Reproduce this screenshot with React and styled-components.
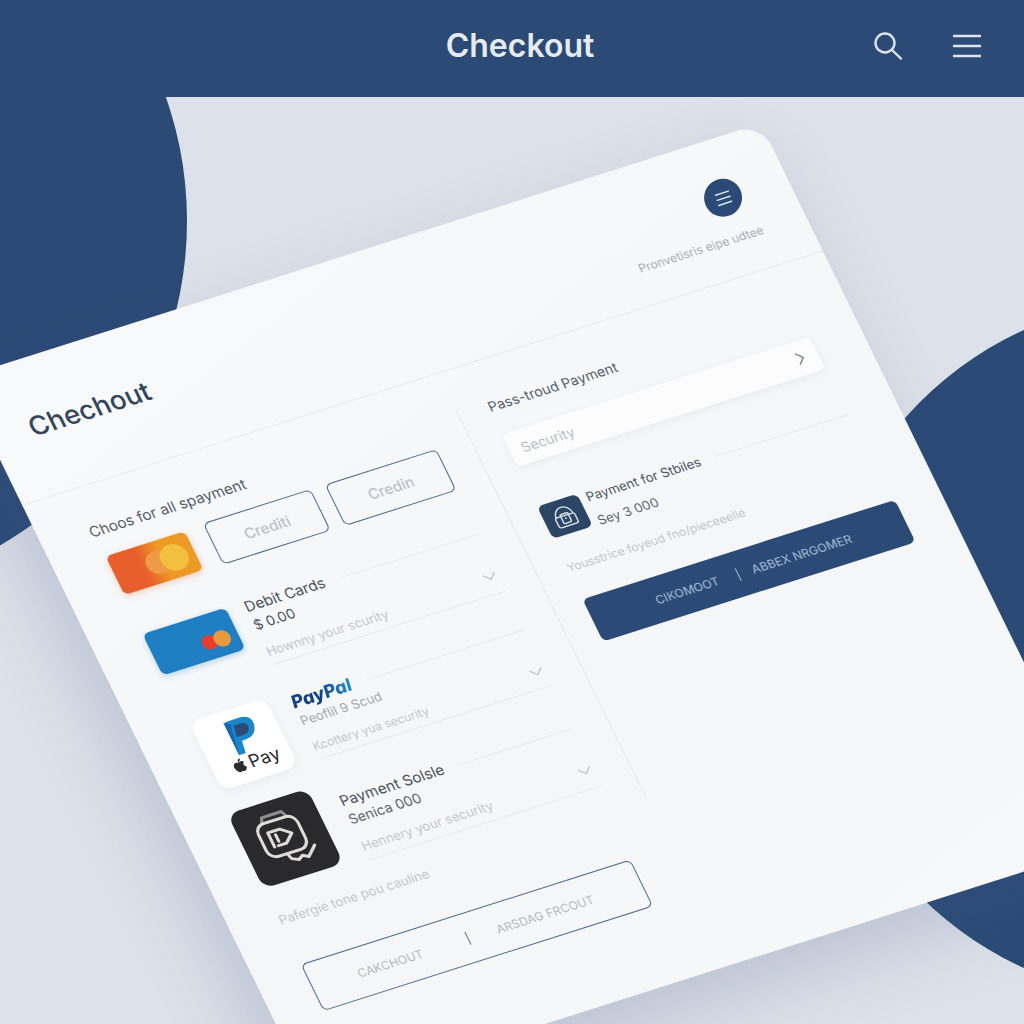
import React from "react";
import styled, { createGlobalStyle } from "styled-components";
import { FaApple } from "react-icons/fa";

const navy = "#2b4a75";

const Global = createGlobalStyle`
  html, body {
    margin: 0;
    padding: 0;
    background: #dde1e9;
    font-family: Inter, "Noto Sans", sans-serif;
  }
`;

const Page = styled.div`
  position: relative;
  width: 1024px;
  height: 1024px;
  overflow: hidden;
  background: #dde1e9;
`;

const Header = styled.header`
  position: relative;
  z-index: 3;
  height: 97px;
  background: ${navy};
  display: grid;
  grid-template-columns: 1fr auto 1fr;
  align-items: center;
  padding: 0 43px 6px;
  box-sizing: border-box;
`;

const HeaderTitle = styled.h1`
  grid-column: 2;
  margin: 0 0 0 16px;
  font-size: 32px;
  font-weight: 600;
  color: #e6ebf3;
`;

const HeaderIcons = styled.div`
  grid-column: 3;
  display: flex;
  justify-content: flex-end;
  align-items: center;
  gap: 50px;
`;

const Blob = styled.div`
  position: absolute;
  z-index: 1;
  border-radius: 50%;
  background: ${navy};
  left: ${(p) => p.$x - p.$r}px;
  top: ${(p) => p.$y - p.$r}px;
  width: ${(p) => p.$r * 2}px;
  height: ${(p) => p.$r * 2}px;
`;

const Stage = styled.main`
  position: relative;
  z-index: 2;
  height: 927px;
`;

/* the whole card is one tilted sheet, its content just flows inside it */
const Card = styled.section`
  width: 840px;
  height: 800px;
  border-radius: 24px;
  background: linear-gradient(160deg, #f8f9fb, #f5f6f8 60%, #f7f8fa);
  box-shadow: -22px 30px 70px rgba(70, 92, 135, 0.22);
  transform-origin: 0 0;
  transform: matrix(0.953, -0.303, 0.44, 0.9, -40, 281);
`;

const CardHead = styled.div`
  height: 142px;
  box-sizing: border-box;
  padding: 41px 45px 0 41px;
  border-bottom: 1px solid #e6e9ed;
  display: flex;
  justify-content: space-between;
  align-items: flex-start;
`;

const CardTitle = styled.h2`
  margin: 11px 0 0;
  font-size: 27px;
  line-height: 36px;
  font-weight: 500;
  color: #35465a;
`;

const HeadAside = styled.div`
  display: flex;
  flex-direction: column;
  align-items: flex-end;
  gap: 16px;
`;

/* undoes the sheet's shear so the dot stays a true circle */
const MenuDot = styled.div`
  width: 38px;
  height: 38px;
  margin-right: 3px;
  border-radius: 50%;
  background: ${navy};
  display: flex;
  align-items: center;
  justify-content: center;
  transform: matrix(0.908, 0.306, -0.444, 0.962, 0, 0);
  svg {
    transform: rotate(-18deg);
  }
`;

const Body = styled.div`
  display: grid;
  grid-template-columns: 436px 1px 1fr;
  align-items: start;
`;

const LeftCol = styled.div`
  padding: 38px 35px 0 49px;
`;

const Divider = styled.div`
  margin-top: 40px;
  height: 431px;
  background: #e6e9ed;
`;

const RightCol = styled.div`
  padding: 39px 46px 0 30px;
`;

const Label = styled.div`
  font-size: ${(p) => p.$size || 15}px;
  line-height: 18px;
  color: #55606d;
`;

const Faint = styled.div`
  font-size: ${(p) => p.$size || 13}px;
  line-height: 16px;
  color: ${(p) => p.$color || "#c3c8cf"};
  white-space: nowrap;
`;

const ChoiceRow = styled.div`
  margin-top: 16px;
  display: flex;
  gap: 15px;
`;

const OrangeCard = styled.div`
  width: 84px;
  height: 43px;
  margin: 2px 5px 0 4px;
  border-radius: 6px;
  background: linear-gradient(90deg, #e85e2d 35%, #ec9a25 62%);
  box-shadow: 0 2px 6px rgba(235, 110, 50, 0.3);
  display: flex;
  align-items: center;
  justify-content: flex-end;
  padding-right: 7px;
  box-sizing: border-box;
`;

const Ring = styled.span`
  width: ${(p) => p.$d}px;
  height: ${(p) => p.$d}px;
  border-radius: 50%;
  background: ${(p) => p.$c};
  margin-left: ${(p) => p.$overlap || 0}px;
`;

const ChoiceButton = styled.button`
  width: ${(p) => p.$w}px;
  height: 46px;
  border: 1px solid #46688f;
  border-radius: 6px;
  background: transparent;
  font: 500 15px Inter, sans-serif;
  color: #bcc2ca;
`;

const Rows = styled.div`
  margin-top: 38px;
  display: flex;
  flex-direction: column;
  gap: 32px;
`;

const Row = styled.div`
  display: grid;
  grid-template-columns: 90px 1fr;
  column-gap: 18px;
  align-items: start;
`;

const RowText = styled.div`
  margin-top: ${(p) => p.$top || 0}px;
  border-bottom: 1px solid #e6e9ed;
  padding-bottom: ${(p) => p.$pad}px;
`;

const TitleLine = styled.div`
  display: flex;
  align-items: center;
  gap: 16px;
  font-size: 15px;
  line-height: 20px;
  color: #4a5460;
  white-space: nowrap;
  &::after {
    content: "";
    flex: 1;
    height: 1px;
    background: #e6e9ed;
  }
`;

const PayPalWord = styled.span`
  font-size: 18px;
  font-weight: 800;
  font-style: italic;
  background: linear-gradient(90deg, #123f85 45%, #1c8fd6);
  -webkit-background-clip: text;
  background-clip: text;
  color: transparent;
`;

const Sub = styled.div`
  margin-top: 1px;
  font-size: ${(p) => p.$size || 14}px;
  line-height: 18px;
  color: ${(p) => p.$color || "#5c6672"};
  white-space: nowrap;
`;

const NoteLine = styled.div`
  margin-top: ${(p) => p.$top || 12}px;
  height: 16px;
  display: flex;
  justify-content: space-between;
  align-items: center;
`;

const BlueCard = styled.div`
  width: 87px;
  height: 46px;
  margin: 4px 0 0 3px;
  border-radius: 6px;
  background: #1f7fc2;
  box-shadow: 0 2px 6px rgba(30, 130, 200, 0.3);
  display: flex;
  align-items: center;
  justify-content: flex-end;
  padding: 10px 8px 0 0;
  box-sizing: border-box;
`;

const LogoTile = styled.div`
  width: 80px;
  height: 76px;
  margin: -3px 0 0 6px;
  border-radius: 12px;
  background: #fff;
  box-shadow: 0 3px 10px rgba(90, 110, 150, 0.08);
  display: flex;
  flex-direction: column;
  align-items: center;
  justify-content: center;
  svg:first-child {
    margin-left: 8px;
  }
`;

const ApplePay = styled.div`
  display: flex;
  align-items: center;
  gap: 2px;
  font-size: 18px;
  line-height: 18px;
  color: #2a2c30;
`;

const DarkTile = styled.div`
  width: 84px;
  height: 83px;
  margin-top: -8px;
  border-radius: 12px;
  background: #2a2a2c;
  display: flex;
  align-items: center;
  justify-content: center;
`;

const Foot = styled.div`
  margin-top: 22px;
`;

const OutlineButton = styled.button`
  margin-top: 41px;
  width: 346px;
  height: 52px;
  padding: 0 20px 0 0;
  border: 1px solid #46688f;
  border-radius: 6px;
  background: transparent;
  display: grid;
  grid-template-columns: 1fr auto 1fr;
  align-items: center;
  justify-items: center;
  font: 400 12px Inter, sans-serif;
  color: #b4bac2;
`;

const Sep = styled.span`
  width: 1px;
  height: 14px;
  background: ${(p) => p.$c};
`;

const SecurityField = styled.div`
  margin-top: 21px;
  height: 36px;
  width: 323px;
  box-sizing: border-box;
  padding: 0 10px 0 12px;
  border-radius: 6px;
  background: #fcfcfd;
  box-shadow: 0 2px 8px rgba(120, 135, 165, 0.1);
  display: flex;
  align-items: center;
  justify-content: space-between;
  font-size: 14px;
  color: #b9bfc6;
`;

const Summary = styled.div`
  margin-top: 44px;
  display: flex;
  align-items: flex-start;
  gap: 7px;
`;

const SummaryIcon = styled.div`
  flex: none;
  width: 42px;
  height: 36px;
  border-radius: 6px;
  background: #2b4565;
  display: flex;
  align-items: center;
  justify-content: center;
`;

const SummaryText = styled.div`
  flex: 1;
  margin-top: -3px;
  padding-right: 4px;
`;

const SummaryTitle = styled(TitleLine)`
  font-size: 13px;
  line-height: 18px;
`;

const SummarySub = styled(Sub)`
  margin-top: 8px;
  font-size: 13px;
`;

const CheckoutButton = styled.button`
  margin-top: 26px;
  width: 328px;
  height: 47px;
  padding: 0;
  border: 0;
  border-radius: 6px;
  background: ${navy};
  display: grid;
  grid-template-columns: 152px auto 1fr;
  align-items: center;
  font: 500 12px Inter, sans-serif;
  color: #93abc9;
`;

const BtnLeft = styled.span`
  justify-self: end;
  margin-right: 20px;
`;

const BtnRight = styled.span`
  justify-self: start;
  margin-left: 14px;
`;

const Chevron = ({ dir = "down", color = "#bfc5cc" }) => (
  <svg width="16" height="16" viewBox="0 0 16 16" fill="none" stroke={color} strokeWidth="1.4" style={{ marginBottom: dir === "down" ? 8 : 0 }}>
    {dir === "down" ? <path d="M2 5l6 6 6-6" /> : <path d="M5 2l6 6-6 6" />}
  </svg>
);

const SearchIcon = () => (
  <svg width="30" height="30" viewBox="0 0 30 30" fill="none" stroke="#dbe4f0" strokeWidth="2.4" strokeLinecap="round">
    <circle cx="12" cy="12" r="9.5" />
    <path d="M19 19l9 8.6" />
  </svg>
);

const BurgerIcon = ({ size = 28, stroke = 2.6 }) => (
  <svg width={size} height={size} viewBox="0 0 28 28" stroke="#dbe4f0" strokeWidth={stroke}>
    <path d="M0 4h28M0 14h28M0 24h28" />
  </svg>
);

const PayPalMark = () => (
  <svg width="34" height="38" viewBox="0 0 34 38">
    <path d="M6 1h15c8 0 12 5 10 12-2 8-8 11-14 11h-4l-2 13H4z" fill="#1b87c9" />
    <path d="M12 7h8c4 0 6 3 5 6-1 5-5 6-9 6h-6z" fill="#2d4b78" />
    <path d="M4 37l6-32-6-4z" fill="#1468b0" />
  </svg>
);

const DeviceMark = () => (
  <svg width="60" height="62" viewBox="0 0 58 60" fill="none" stroke="#dedcd7" strokeWidth="3" strokeLinejoin="round" strokeLinecap="round">
    <path d="M15 8l2-5h20l2 5" stroke="#8c8c8c" />
    <rect x="7" y="9" width="40" height="35" rx="9" />
    <path d="M16 19v15M16 19h12l9 7-9 8h-8" />
    <path d="M22 23v7" />
    <path d="M24 44l2 6 6 3 5-3 5 3 10-9" />
  </svg>
);

const HomeLock = () => (
  <svg width="26" height="26" viewBox="0 0 26 26" fill="none" stroke="#dbe3ee" strokeWidth="1.4" strokeLinejoin="round">
    <path d="M4 12c1-6 5-9 9-9s8 3 9 9" />
    <rect x="3" y="12" width="20" height="11" rx="2" />
    <rect x="9" y="10" width="8" height="10" rx="1" />
    <path d="M12 15h2" />
  </svg>
);

const App = () => {
  return (
    <Page>
      <Global />
      <Header>
        <HeaderTitle>Checkout</HeaderTitle>
        <HeaderIcons>
          <SearchIcon />
          <BurgerIcon />
        </HeaderIcons>
      </Header>
      <Blob $x={-188} $y={221} $r={375} />
      <Blob $x={1168} $y={649} $r={350} />
      <Stage>
        <Card>
          <CardHead>
            <CardTitle>Chechout</CardTitle>
            <HeadAside>
              <MenuDot>
                <BurgerIcon size={15} stroke={2.8} />
              </MenuDot>
              <Faint $size={12} $color="#a9b0b9">Pronvetisris eipe udtee</Faint>
            </HeadAside>
          </CardHead>
          <Body>
            <LeftCol>
              <Label>Choos for all spayment</Label>
              <ChoiceRow>
                <OrangeCard>
                  <Ring $d={24} $c="#f09a48" />
                  <Ring $d={28} $c="#f2bf3f" $overlap={-9} />
                </OrangeCard>
                <ChoiceButton $w={114}>Crediti</ChoiceButton>
                <ChoiceButton $w={118}>Credin</ChoiceButton>
              </ChoiceRow>
              <Rows>
                <Row>
                  <BlueCard>
                    <Ring $d={15} $c="#ea3d2b" />
                    <Ring $d={17} $c="#e79a3d" $overlap={-3} />
                  </BlueCard>
                  <RowText $pad={6}>
                    <TitleLine>Debit Cards</TitleLine>
                    <Sub $color="#4a5460">$ 0.00</Sub>
                    <NoteLine>
                      <Faint>Hownny your scurity</Faint>
                      <Chevron />
                    </NoteLine>
                  </RowText>
                </Row>
                <Row>
                  <LogoTile>
                    <PayPalMark />
                    <ApplePay>
                      <FaApple size={16} />
                      Pay
                    </ApplePay>
                  </LogoTile>
                  <RowText $pad={5}>
                    <TitleLine>
                      <PayPalWord>PayPal</PayPalWord>
                    </TitleLine>
                    <Sub $size={13} $color="#a3aab3">Peoflil 9 Scud</Sub>
                    <NoteLine>
                      <Faint $size={12}>Kcottery yua security</Faint>
                      <Chevron />
                    </NoteLine>
                  </RowText>
                </Row>
                <Row>
                  <DarkTile>
                    <DeviceMark />
                  </DarkTile>
                  <RowText $top={5} $pad={7}>
                    <TitleLine>Payment Solsle</TitleLine>
                    <Sub>Senica 000</Sub>
                    <NoteLine>
                      <Faint>Hennery your security</Faint>
                      <Chevron />
                    </NoteLine>
                  </RowText>
                </Row>
              </Rows>
              <Foot>
                <Faint>Pafergie tone pou cauline</Faint>
              </Foot>
              <OutlineButton>
                <span>CAKCHOUT</span>
                <Sep $c="#5c7392" />
                <span>ARSDAG FRCOUT</span>
              </OutlineButton>
            </LeftCol>
            <Divider />
            <RightCol>
              <Label $size={14}>Pass-troud Payment</Label>
              <SecurityField>
                Security
                <Chevron dir="right" color="#7d8793" />
              </SecurityField>
              <Summary>
                <SummaryIcon>
                  <HomeLock />
                </SummaryIcon>
                <SummaryText>
                  <SummaryTitle>Payment for Stbiles</SummaryTitle>
                  <SummarySub>Sey 3 000</SummarySub>
                </SummaryText>
              </Summary>
              <NoteLine $top={20}>
                <Faint $size={12}>Yousstrice foyeud fno/pieceeelle</Faint>
              </NoteLine>
              <CheckoutButton>
                <BtnLeft>CIKOMOOT</BtnLeft>
                <Sep $c="#a8bcd4" />
                <BtnRight>ABBEX NRGOMER</BtnRight>
              </CheckoutButton>
            </RightCol>
          </Body>
        </Card>
      </Stage>
    </Page>
  );
};

export default App;
